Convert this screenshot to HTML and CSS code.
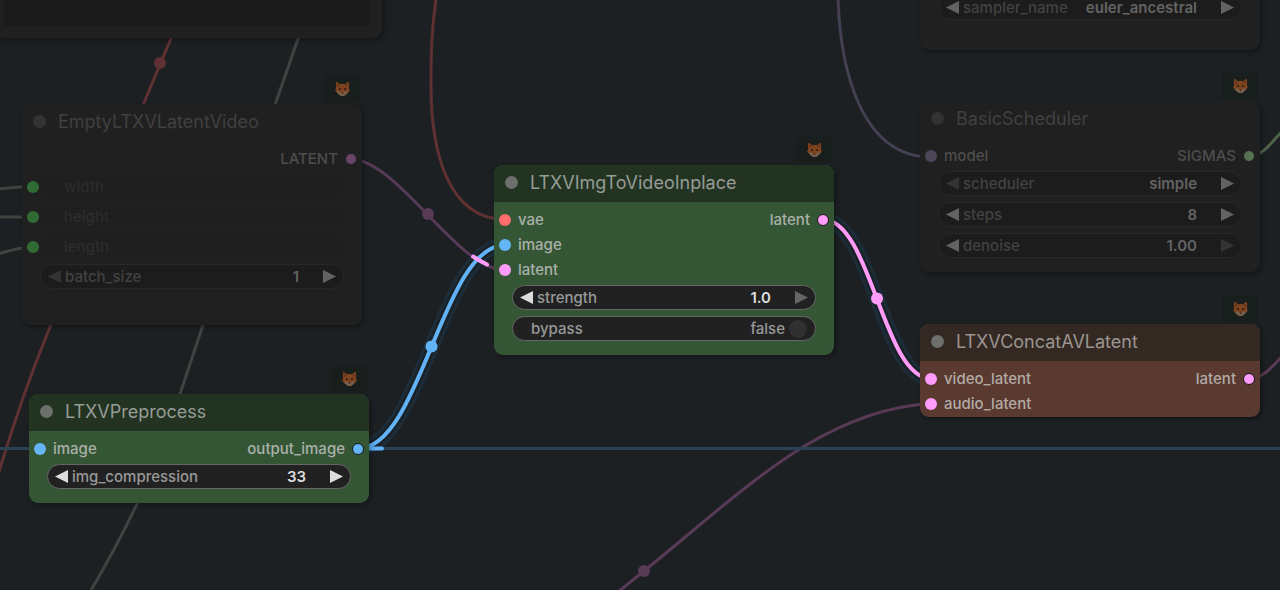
FILE: index.html
```html
<!DOCTYPE html>
<html lang="en">
<head>
<meta charset="utf-8">
<title>Node graph</title>
<link rel="stylesheet" href="styles.css">
</head>
<body>
<svg class="defs" aria-hidden="true">
  <symbol id="fox" viewBox="0 0 18 18">
    <path fill="#7d4320" d="M2.500 1.500 6.500 4.500Q9 3.600 11.500 4.500L15.500 1.500Q16.600 5.500 15.800 8.500L16.800 11.500 13 15Q11 17 9 17Q7 17 5 15L1.200 11.500 2.200 8.500Q1.400 5.500 2.500 1.500Z"/>
    <path fill="#5c2e1a" d="M3.600 3.600 5.800 5.300 3.800 7.500ZM14.400 3.600 12.200 5.300 14.200 7.500Z"/>
    <path fill="#75614f" d="M2.400 12.500Q5.500 11.500 8 13.500L9 14.500 10 13.500Q12.500 11.500 15.600 12.500L13 15Q11 17 9 17Q7 17 5 15Z"/>
    <path fill="#2b1a14" d="M5.500 8.500h1.600v2H5.500ZM10.900 8.500h1.600v2h-1.600ZM8 13.500h2L9 15Z"/>
  </symbol>
  <symbol id="left" viewBox="0 0 13 13"><path fill="currentColor" d="M13 0V13L0 6.500Z"/></symbol>
  <symbol id="right" viewBox="0 0 13 13"><path fill="currentColor" d="M0 0V13L13 6.500Z"/></symbol>
</svg>

<main class="canvas">
  <svg class="links" aria-hidden="true">
    <g class="link red">
      <path d="M172 36 50 327Q22 395-2 475"/>
      <path d="M436-2C431 35 431 60 431 85C431 150 447 219 505 219.500"/>
      <circle cx="160" cy="63" r="6"/>
    </g>
    <g class="link sage">
      <path d="M299 36 276 102 202 328 181 391Q160 456 136 506Q116 548 90 592"/>
      <path d="M-2 189Q16 187 33 186"/>
      <path d="M-2 217H33"/>
      <path d="M-2 254Q16 248 33 247"/>
    </g>
    <g class="link lavender"><path d="M838-2C840 62 858 157 931 157"/></g>
    <g class="link moss"><path d="M1249 156.500C1263 156 1272 142 1284 129"/></g>
    <g class="link plum">
      <path d="M350 159C398 159 457 270 505 270"/>
      <circle cx="428" cy="214" r="6"/>
      <path d="M618 592 644 571C740 494 820 410 931 403.500"/>
      <circle cx="644" cy="571" r="6"/>
      <path d="M1249 378.500C1264 378 1272 367 1284 354"/>
    </g>
    <g class="link navy"><path d="M-2 448.500H4000"/></g>
    <path class="halo" d="M358 448.500C421 448.500 442 245 505 245"/>
    <path class="rim" d="M358 448.500C421 448.500 442 245 505 245"/>
    <g class="link blue live">
      <path d="M358 448.500C421 448.500 442 245 505 245"/>
      <path d="M360 448.500H382"/>
      <circle cx="431.500" cy="346.500" r="6"/>
    </g>
    <path class="halo" d="M823 219.500C871 219.500 883 378.500 931 378.500"/>
    <path class="rim" d="M823 219.500C871 219.500 883 378.500 931 378.500"/>
    <g class="link pink live">
      <path d="M823 219.500C871 219.500 883 378.500 931 378.500"/>
      <path d="M473 256.500Q480 261 487 264.500"/>
      <circle cx="877" cy="298.500" r="6"/>
    </g>
  </svg>

  <section class="node muted preview-node"><div class="preview"></div></section>

  <section class="node muted sampler-node">
    <div class="head"></div>
    <div class="widgets">
      <div class="widget">
        <button class="step" aria-label="Previous sampler"><svg><use href="#left"/></svg></button>
        <label for="sampler">sampler_name</label>
        <select id="sampler"><option>euler_ancestral</option></select>
        <button class="step" aria-label="Next sampler"><svg><use href="#right"/></svg></button>
      </div>
    </div>
  </section>

  <section class="node muted empty-node">
    <span class="badge"><svg><use href="#fox"/></svg></span>
    <header class="head"><i class="state"></i><h2>EmptyLTXVLatentVideo</h2></header>
    <div class="slots">
      <ul></ul>
      <ul class="outs"><li>LATENT<i class="pin plum"></i></li></ul>
    </div>
    <div class="widgets">
      <div class="linked"><i class="pin green"></i><div class="widget off"><span>width</span></div></div>
      <div class="linked"><i class="pin green"></i><div class="widget off"><span>height</span></div></div>
      <div class="linked"><i class="pin green"></i><div class="widget off"><span>length</span></div></div>
      <div class="widget">
        <button class="step" aria-label="Decrease batch size" disabled><svg><use href="#left"/></svg></button>
        <label for="batch">batch_size</label>
        <input id="batch" value="1">
        <button class="step" aria-label="Increase batch size"><svg><use href="#right"/></svg></button>
      </div>
    </div>
  </section>

  <section class="node muted scheduler-node">
    <span class="badge"><svg><use href="#fox"/></svg></span>
    <header class="head"><i class="state"></i><h2>BasicScheduler</h2></header>
    <div class="slots">
      <ul><li><i class="pin lavender"></i>model</li></ul>
      <ul class="outs"><li>SIGMAS<i class="pin moss"></i></li></ul>
    </div>
    <div class="widgets">
      <div class="widget">
        <button class="step" aria-label="Previous scheduler" disabled><svg><use href="#left"/></svg></button>
        <label for="scheduler">scheduler</label>
        <select id="scheduler"><option>simple</option></select>
        <button class="step" aria-label="Next scheduler"><svg><use href="#right"/></svg></button>
      </div>
      <div class="widget">
        <button class="step" aria-label="Decrease steps"><svg><use href="#left"/></svg></button>
        <label for="steps">steps</label>
        <input id="steps" value="8">
        <button class="step" aria-label="Increase steps"><svg><use href="#right"/></svg></button>
      </div>
      <div class="widget">
        <button class="step" aria-label="Decrease denoise"><svg><use href="#left"/></svg></button>
        <label for="denoise">denoise</label>
        <input id="denoise" value="1.00">
        <button class="step" aria-label="Increase denoise" disabled><svg><use href="#right"/></svg></button>
      </div>
    </div>
  </section>

  <section class="node green-node inplace-node">
    <span class="badge"><svg><use href="#fox"/></svg></span>
    <header class="head"><i class="state"></i><h2>LTXVImgToVideoInplace</h2></header>
    <div class="slots">
      <ul>
        <li><i class="pin red"></i>vae</li>
        <li><i class="pin blue"></i>image</li>
        <li><i class="pin pink"></i>latent</li>
      </ul>
      <ul class="outs"><li>latent<i class="pin pink"></i></li></ul>
    </div>
    <div class="widgets">
      <div class="widget">
        <button class="step" aria-label="Decrease strength"><svg><use href="#left"/></svg></button>
        <label for="strength">strength</label>
        <input id="strength" value="1.0">
        <button class="step" aria-label="Increase strength" disabled><svg><use href="#right"/></svg></button>
      </div>
      <div class="widget toggle">
        <label for="bypass">bypass</label>
        <span>false</span>
        <input id="bypass" type="checkbox">
      </div>
    </div>
  </section>

  <section class="node green-node preprocess-node">
    <span class="badge"><svg><use href="#fox"/></svg></span>
    <header class="head"><i class="state"></i><h2>LTXVPreprocess</h2></header>
    <div class="slots">
      <ul><li><i class="pin blue"></i>image</li></ul>
      <ul class="outs"><li>output_image<i class="pin blue"></i></li></ul>
    </div>
    <div class="widgets">
      <div class="widget">
        <button class="step" aria-label="Decrease compression"><svg><use href="#left"/></svg></button>
        <label for="compression">img_compression</label>
        <input id="compression" value="33">
        <button class="step" aria-label="Increase compression"><svg><use href="#right"/></svg></button>
      </div>
    </div>
  </section>

  <section class="node brown-node concat-node">
    <span class="badge"><svg><use href="#fox"/></svg></span>
    <header class="head"><i class="state"></i><h2>LTXVConcatAVLatent</h2></header>
    <div class="slots">
      <ul>
        <li><i class="pin pink"></i>video_latent</li>
        <li><i class="pin pink"></i>audio_latent</li>
      </ul>
      <ul class="outs"><li>latent<i class="pin pink"></i></li></ul>
    </div>
  </section>
</main>
</body>
</html>
```

FILE: styles.css
```css
* { box-sizing: border-box; }

body {
  margin: 0;
  font-family: Inter, "Liberation Sans", sans-serif;
  font-size: 15px;
  font-weight: 500;
  background: #1c2023;
}

.defs { display: none; }

.canvas {
  position: relative;
  width: 100%;
  height: 100vh;
  overflow: hidden;
}

/* Links */
.links {
  position: absolute;
  inset: 0;
  width: 100%;
  height: 100%;
}
.link { fill: currentColor; }
.link path { fill: none; stroke: currentColor; stroke-width: 3; }
.link.live path { stroke-width: 4; stroke-linecap: round; }
.link.red { color: #5f3132; }
.link.sage { color: #3d4540; }
.link.lavender { color: #443f52; }
.link.moss { color: #4d6349; }
.link.plum { color: #583a56; }
.link.navy { color: #2a4254; }
.link.blue { color: #62b2f7; }
.link.pink { color: #ff9cf9; }
.halo { fill: none; stroke: #1c2d39; stroke-width: 15; }
.rim { fill: none; stroke: #1a2228; stroke-width: 9; }

/* Nodes */
.node {
  position: absolute;
  width: 340px;
  border-radius: 9px;
  color: #a9b0a9;
  box-shadow: 2px 2px 5px rgba(0, 0, 0, 0.35);
}
.head {
  display: flex;
  align-items: center;
  gap: 12px;
  height: 37px;
  padding: 0 11px 2px;
  border-radius: 9px 9px 0 0;
}
.head h2 {
  margin: 0;
  font-size: 18px;
  font-weight: 400;
  line-height: 24px;
  white-space: nowrap;
  color: #969c96;
}
.state {
  width: 13px;
  height: 13px;
  border-radius: 50%;
  background: #6c6f6c;
}

.slots {
  display: flex;
  justify-content: space-between;
  padding: 5px 5px 0;
}
.slots ul { margin: 0; padding: 0; list-style: none; }
.slots li {
  display: flex;
  align-items: center;
  gap: 7px;
  height: 25px;
}
.outs li { justify-content: flex-end; }
.pin {
  flex: none;
  width: 12px;
  height: 12px;
  border-radius: 50%;
  background: currentColor;
}
.outs .pin { border: 1px solid #151a15; }
.pin.red { color: #ff6e6e; }
.pin.blue { color: #64b5f6; }
.pin.pink { color: #ff9cf9; }
.pin.green { color: #306a35; }
.pin.plum { color: #6b4468; }
.pin.lavender { color: #4b4658; }
.pin.moss { color: #567052; }

.widgets {
  display: grid;
  gap: 6px;
  padding: 3px 18px 14px;
}
.widget {
  display: flex;
  align-items: center;
  gap: 4px;
  flex: 1;
  min-width: 0;
  height: 25px;
  padding: 0 7px;
  border: 1px solid #666;
  border-radius: 13px;
  background: #212121;
  color: #999;
}
.linked {
  display: flex;
  align-items: center;
  gap: 1px;
  margin-left: -13px;
}
.widget input:not([type="checkbox"]),
.widget select {
  flex: 1;
  width: 0;
  min-width: 0;
  margin: 0 20px 0 0;
  padding: 0;
  border: 0;
  appearance: none;
  background: none;
  color: #ddd;
  font: inherit;
  font-weight: 600;
  text-align: right;
  text-align-last: right;
}
.step {
  display: flex;
  padding: 0;
  border: 0;
  background: none;
  color: #ddd;
}
.step svg { width: 13px; height: 13px; }
.step:disabled { color: #666; }
.toggle { padding: 0 8px 0 18px; }
.toggle label { flex: 1; }
.toggle input {
  width: 18px;
  height: 18px;
  margin: 0;
  appearance: none;
  border-radius: 50%;
  background: #303030;
}

.badge {
  position: absolute;
  top: -28px;
  right: 2px;
  display: flex;
  align-items: center;
  justify-content: center;
  width: 36px;
  height: 25px;
  background: #171e1b;
}
.badge svg { width: 17px; height: 17px; }

/* Colour themes */
.green-node { background: #355635; }
.green-node .head { background: #223322; }
.brown-node { background: #593930; color: #b3aaa7; }
.brown-node .head { background: #332922; }
.brown-node h2 { color: #9b9591; }
.muted { background: #202020; color: #4d4d4d; }
.muted h2 { color: #404040; }
.muted .state { background: #333; }
.muted .outs .pin { border-color: #202020; }
.muted .widget { background: #1c1c1c; border-color: #282828; color: #424242; }
.muted .widget input,
.muted .widget select { color: #636363; }
.muted .step { color: #636363; }
.muted .step:disabled { color: #333; }
.muted .widget.off {
  padding-left: 23px;
  border-color: #202020;
  background: #1f1f1f;
  color: #2c2c2c;
}
.empty-node .widgets { gap: 5px; }

/* Positions on the graph */
.preview-node { left: -8px; top: -60px; width: 390px; padding: 0 12px 12px; }
.preview { height: 86px; background: #1b1b1b; }
.sampler-node { left: 920px; top: -45px; padding-bottom: 16px; }
.empty-node { left: 22px; top: 104px; padding-bottom: 22px; }
.scheduler-node { left: 920px; top: 101px; }
.inplace-node { left: 494px; top: 165px; }
.preprocess-node { left: 29px; top: 394px; }
.concat-node { left: 920px; top: 324px; padding-bottom: 1px; }
```
